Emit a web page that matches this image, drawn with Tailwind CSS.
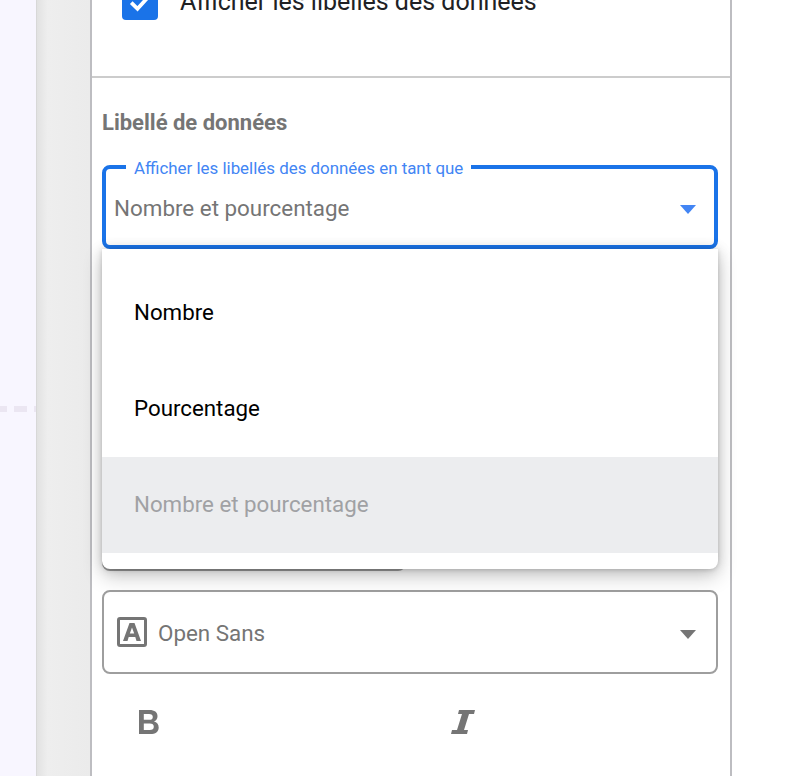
<!DOCTYPE html>
<html lang="fr">
<head>
<meta charset="UTF-8" />
<meta name="viewport" content="width=device-width, initial-scale=1.0" />
<title>Libellé de données</title>
<script src="https://cdn.jsdelivr.net/npm/@tailwindcss/browser@4"></script>
</head>
<body class="bg-white font-['Roboto',sans-serif] overflow-hidden">
<div class="flex h-[776px] w-[798px] overflow-hidden">
    <!-- chart canvas edge -->
    <div class="relative w-[36px] shrink-0 bg-[#f8f6ff]">
        <div class="flex gap-[7px] pt-[406px]">
            <div class="h-[6px] w-[7px] shrink-0 bg-[#ebe6f2]"></div>
            <div class="h-[6px] w-[13px] shrink-0 bg-[#ebe6f2]"></div>
            <div class="h-[6px] w-[2px] shrink-0 bg-[#ebe6f2]"></div>
        </div>
    </div>

    <!-- gutter -->
    <div class="w-[54px] shrink-0 border-l border-[#d8d8d8] bg-gradient-to-r from-[#e2e2e2] via-[#eeeeee] via-20% to-[#ebebeb]"></div>

    <!-- settings panel -->
    <div class="relative w-[642px] shrink-0 border-x-2 border-[#bdbdc1] bg-white">
        <div class="flex h-[78px] items-start border-b-2 border-[#cccccc] pl-[30px]">
            <div class="-mt-[16px] flex h-[36px] w-[36px] items-center justify-center rounded-[4px] bg-[#1a73e8]">
                <svg viewBox="0 0 24 24" class="h-[30px] w-[30px]" fill="none" stroke="#ffffff" stroke-width="3"><path d="M5 12.5l5 5 9-10" /></svg>
            </div>
            <span class="-mt-[12px] ml-[22px] text-[25px] leading-[28px] whitespace-nowrap text-[#202124]">Afficher les libellés des données</span>
        </div>

        <div class="pr-[12px] pl-[10px]">
            <h3 class="mt-[33px] text-[22px] leading-[24px] font-bold text-[#757575]">Libellé de données</h3>

            <fieldset class="mt-[22px] h-[92px] rounded-[8px] border-4 border-[#1a73e8]">
                <legend class="ml-[20px] px-[8px] pt-[2px] text-[16.9px] leading-[18px] text-[#4285f4]">Afficher les libellés des données en tant que</legend>
                <div class="flex items-center justify-between pt-[17px] pr-[18px] pl-[8px]">
                    <span class="text-[22.4px] leading-[28px] text-[#757575]">Nombre et pourcentage</span>
                    <div class="mt-[2px] h-0 w-0 border-x-[8px] border-t-[9px] border-x-transparent border-t-[#4285f4]"></div>
                </div>
            </fieldset>

            <!-- control hidden under the open menu -->
            <div class="h-[321px]"></div>

            <div class="mt-[20px] flex h-[84px] items-center rounded-[8px] border-2 border-[#9e9e9e] pr-[20px] pl-[13px]">
                <svg viewBox="0 0 30 30" class="h-[30px] w-[30px] shrink-0">
                    <rect x="1.500" y="1.500" width="27" height="27" rx="1.500" fill="none" stroke="#757575" stroke-width="3" />
                    <path fill="#757575" d="M6 24L12.500 6h5L24 24h-4.500l-1.200-4h-6.600l-1.200 4zm6.800-7.500h4.400L15 10.400z" />
                </svg>
                <span class="mt-[2px] ml-[11px] text-[22.4px] leading-[28px] text-[#757575]">Open Sans</span>
                <div class="mt-[5px] ml-auto h-0 w-0 border-x-[8px] border-t-[9px] border-x-transparent border-t-[#757575]"></div>
            </div>

            <div class="flex pt-[36px]">
                <div class="w-[349px] pl-[37px]">
                    <svg viewBox="0 0 20 24" class="h-[24px] w-[20px]"><path fill="#757575" fill-rule="evenodd" d="M0 0h10.500c5 0 8 2.200 8 6.200 0 2.600-1.300 4.400-3.500 5.300 2.900.8 4.700 2.800 4.700 5.900C19.700 21.700 16.500 24 11.200 24H0zm4.800 4v5.800h5.300c2.500 0 3.700-1 3.700-2.900S12.600 4 10 4zm0 9.600V20h6c2.600 0 4-1.100 4-3.200 0-2.100-1.400-3.200-4-3.200z" /></svg>
                </div>
                <svg viewBox="0 0 24 24" class="h-[24px] w-[24px]"><path fill="#757575" d="M8 0h16l-1 4h-5L13 20h4l-1 4H0l1-4h5L11 4H7z" /></svg>
            </div>
        </div>

        <!-- dropdown menu -->
        <div class="absolute top-[249px] left-[10px] w-[616px]">
            <div class="absolute right-[312px] -bottom-[2px] left-0 h-[20px] rounded-b-[8px] bg-[#a0a0a0]"></div>
            <div class="relative h-[320px] rounded-b-[8px] bg-white shadow-[0_8px_20px_rgba(0,0,0,0.2),0_0_14px_rgba(0,0,0,0.14),0_1px_4px_rgba(0,0,0,0.14)]">
                <div class="pt-[16px]">
                    <div class="flex h-[96px] items-center pl-[32px] text-[22.3px] text-black">Nombre</div>
                    <div class="flex h-[96px] items-center pl-[32px] text-[22.3px] text-black">Pourcentage</div>
                    <div class="flex h-[96px] items-center bg-[#ecedef] pl-[32px] text-[22.3px] text-[#a0a1a4]">Nombre et pourcentage</div>
                </div>
            </div>
        </div>
    </div>
</div>
</body>
</html>
